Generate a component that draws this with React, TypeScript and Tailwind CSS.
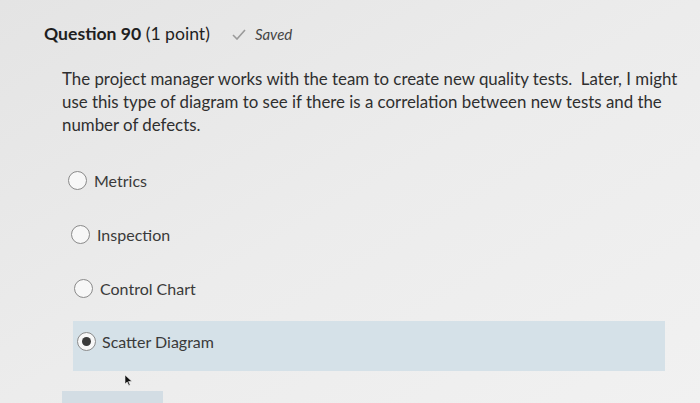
import React from 'react';

const options = [
  { label: 'Metrics', indent: 'pl-[68px]', selected: false },
  { label: 'Inspection', indent: 'pl-[71px]', selected: false },
  { label: 'Control Chart', indent: 'pl-[74px]', selected: false },
  { label: 'Scatter Diagram', indent: 'pl-[77px]', selected: true },
];

const Radio: React.FC<{ checked: boolean }> = ({ checked }) => (
  <span className="w-[19px] h-[19px] rounded-full border border-[#8a8a8a] bg-[#f7f7f7] flex items-center justify-center shrink-0">
    {checked && <span className="w-[9px] h-[9px] rounded-full bg-[#3a3a3a]" />}
  </span>
);

const App: React.FC = () => {
  return (
    <div
      className="relative w-[700px] h-[403px] overflow-hidden bg-gradient-to-br from-[#e4e4e4] via-[#ececec] to-[#f1f1f1] text-[#2f2f2f]"
      style={{ fontFamily: 'Lato, "Open Sans", sans-serif' }}
    >
      {/* Header */}
      <div className="flex items-baseline pt-[22px] pl-[44px]">
        <h2 className="text-[17.6px] leading-[24px] text-[#1f1f1f]">
          <span className="font-bold">Question 90</span> (1 point)
        </h2>
        <span className="ml-[22px] flex items-center gap-[9px] text-[15px] italic text-[#444]">
          <svg width="14" height="11" viewBox="0 0 14 11" className="text-[#9a9a9a]">
            <path d="M1 6l4 4 8-9" fill="none" stroke="currentColor" strokeWidth="1.6" />
          </svg>
          Saved
        </span>
      </div>

      {/* Question text */}
      <p className="mt-[21px] ml-[62px] w-[630px] text-[16.85px] leading-[23px] text-[#2f2f2f]">
        The project manager works with the team to create new quality tests.&nbsp; Later, I might use this type of
        diagram to see if there is a correlation between new tests and the number of defects.
      </p>

      {/* Answers */}
      <div className="mt-[17px] flex flex-col">
        {options.map((o) =>
          o.selected ? (
            <div key={o.label} className="ml-[73px] mr-[35px] h-[50px] mt-[6px] bg-[#d5e1e8] flex items-start pt-[11px] pl-[4px] gap-[6px]">
              <Radio checked />
              <span className="text-[16px] leading-[19px] text-[#3a3a3a]">{o.label}</span>
            </div>
          ) : (
            <div key={o.label} className={`${o.indent} h-[54px] flex items-center gap-[7px]`}>
              <Radio checked={false} />
              <span className="text-[16px] leading-[19px] text-[#3a3a3a]">{o.label}</span>
            </div>
          )
        )}
      </div>

      {/* Next button peeking in at the bottom */}
      <div className="mt-[20px] ml-[62px] w-[101px] h-[20px] bg-[#d3dde4]" />

      {/* Mouse cursor */}
      <svg className="absolute left-[124px] top-[374px]" width="9" height="13" viewBox="0 0 9 13">
        <path d="M1 1v9l2.2-2 1.6 3.6 1.4-.6-1.6-3.5H8z" fill="#111" stroke="#eee" strokeWidth="0.6" />
      </svg>
    </div>
  );
};

export default App;
